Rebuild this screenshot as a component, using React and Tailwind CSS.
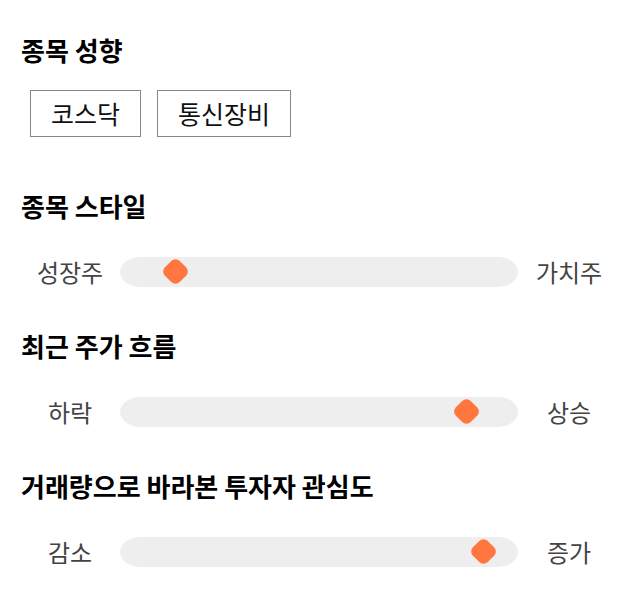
const sliders = [
    { title: '종목 스타일', left: '성장주', right: '가치주', pos: 55, first: true },
    { title: '최근 주가 흐름', left: '하락', right: '상승', pos: 346 },
    { title: '거래량으로 바라본 투자자 관심도', left: '감소', right: '증가', pos: 363 },
];

function Slider({ left, right, pos }) {
    return (
        <div className="flex items-center h-[30px] mt-[34px]">
            <div className="w-[100px] text-center text-[24px] text-[#444]">{left}</div>
            <div className="relative w-[398px] h-[30px] bg-[#eeeeee] rounded-[20px/15px]">
                <div
                    className="absolute top-[4px] w-[21px] h-[21px] bg-[#ff773f] rotate-45 rounded-[6px]"
                    style={{ left: pos - 10 }}
                />
            </div>
            <div className="w-[102px] text-center text-[24px] text-[#444]">{right}</div>
        </div>
    );
}

export default function App() {
    return (
        <div className="w-[640px] h-[606px] bg-white px-5 pt-[33px]" style={{ fontFamily: '"Noto Sans CJK KR", "Noto Sans", sans-serif' }}>
            <h2 className="text-[26px] font-bold text-black leading-[34px] pl-px">종목 성향</h2>
            <div className="flex gap-4 ml-[10px] mt-[23px]">
                <div className="border border-[#888] h-[47px] px-5 flex items-center text-[25px] text-[#111]">코스닥</div>
                <div className="border border-[#888] h-[47px] px-5 flex items-center text-[25px] text-[#111]">통신장비</div>
            </div>
            {sliders.map((s) => (
                <div key={s.title} className={s.first ? 'mt-[52px]' : 'mt-[42px]'}>
                    <h2 className="text-[26px] font-bold text-black leading-[34px] pl-px">{s.title}</h2>
                    <Slider left={s.left} right={s.right} pos={s.pos} />
                </div>
            ))}
        </div>
    );
}
